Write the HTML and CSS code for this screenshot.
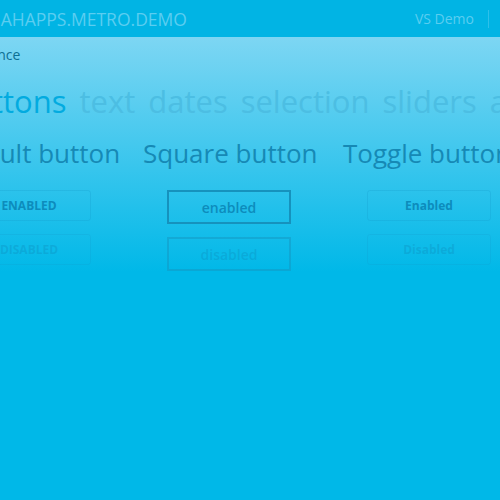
FILE: index.html
```html
<!DOCTYPE html>
<html>
<head>
<meta charset="utf-8">
<link rel="stylesheet" href="styles.css">
</head>
<body>
<div class="window">
  <header class="titlebar">
    <div class="title">MAHAPPS.METRO.DEMO</div>
    <div class="commands">
      <span class="vs">VS Demo</span>
      <span class="sep"></span>
    </div>
  </header>
  <main class="content">
    <div class="menu">Appearance</div>
    <nav class="tabs">
      <span class="tab active">buttons</span>
      <span class="tab">text</span>
      <span class="tab">dates</span>
      <span class="tab">selection</span>
      <span class="tab">sliders</span>
      <span class="tab">animations</span>
    </nav>
    <section class="columns">
      <div class="col">
        <h2 class="col-title">Default button</h2>
        <div class="col-body">
          <div class="btn btn-default">ENABLED</div>
          <div class="btn btn-default disabled">DISABLED</div>
        </div>
      </div>
      <div class="col">
        <h2 class="col-title">Square button</h2>
        <div class="col-body">
          <div class="btn btn-square">enabled</div>
          <div class="btn btn-square disabled">disabled</div>
        </div>
      </div>
      <div class="col">
        <h2 class="col-title">Toggle button</h2>
        <div class="col-body">
          <div class="btn btn-toggle">Enabled</div>
          <div class="btn btn-toggle disabled">Disabled</div>
        </div>
      </div>
    </section>
  </main>
</div>
</body>
</html>
```

FILE: styles.css
```css
* { box-sizing: border-box; }
html, body { margin: 0; padding: 0; }
body {
  width: 500px;
  height: 500px;
  overflow: hidden;
  font-family: "Open Sans", "Noto Sans", sans-serif;
  background: #00b8e8;
}
.window {
  width: 500px;
  height: 500px;
  display: flex;
  flex-direction: column;
  overflow: hidden;
}
.titlebar {
  height: 37px;
  flex: none;
  background: #01b4e4;
  display: flex;
  align-items: center;
  justify-content: space-between;
}
.title {
  margin-left: -15px;
  font-size: 17.5px;
  color: #5bcdf0;
  white-space: nowrap;
}
.commands {
  display: flex;
  align-items: center;
  gap: 14px;
  margin-right: 11px;
}
.vs {
  font-size: 14px;
  color: #5bcdf0;
}
.sep {
  width: 1px;
  height: 18px;
  background: #2ec0ea;
}
.content {
  flex: 1;
  background: linear-gradient(to bottom, #7dd6f3 0px, #00b8e8 235px, #00b8e8 100%);
  overflow: hidden;
}
.menu {
  margin: 8px 0 0 -58px;
  font-size: 14px;
  color: #0d6f93;
  height: 20px;
  white-space: nowrap;
}
.tabs {
  margin: 14px 0 0 -46px;
  display: flex;
  gap: 13px;
  white-space: nowrap;
  font-size: 31px;
  line-height: 44px;
}
.tab { color: #4cbee3; }
.tab.active { color: #02abe0; }
.columns {
  margin: 12px 0 0 -57px;
  display: flex;
}
.col {
  width: 200px;
  flex: none;
}
.col-title {
  margin: 0;
  font-weight: normal;
  font-size: 26px;
  line-height: 36px;
  color: #1689b5;
  white-space: nowrap;
}
.col-body {
  margin-top: 19px;
  padding-left: 24px;
  display: flex;
  flex-direction: column;
  gap: 13px;
}
.btn {
  width: 124px;
  height: 31px;
  display: flex;
  align-items: center;
  justify-content: center;
  font-size: 12px;
  color: #0d8cbc;
}
.btn-default, .btn-toggle {
  border: 1px solid rgba(20,150,200,0.25);
  border-radius: 3px;
  font-weight: bold;
}
.btn-square {
  height: 34px;
  border: 2px solid #1692bd;
  font-size: 14px;
  font-weight: 600;
}
.btn.disabled { color: rgba(13,140,188,0.35); border-color: rgba(20,150,200,0.2); }
.btn-square.disabled { border-color: rgba(22,146,189,0.45); }
```
